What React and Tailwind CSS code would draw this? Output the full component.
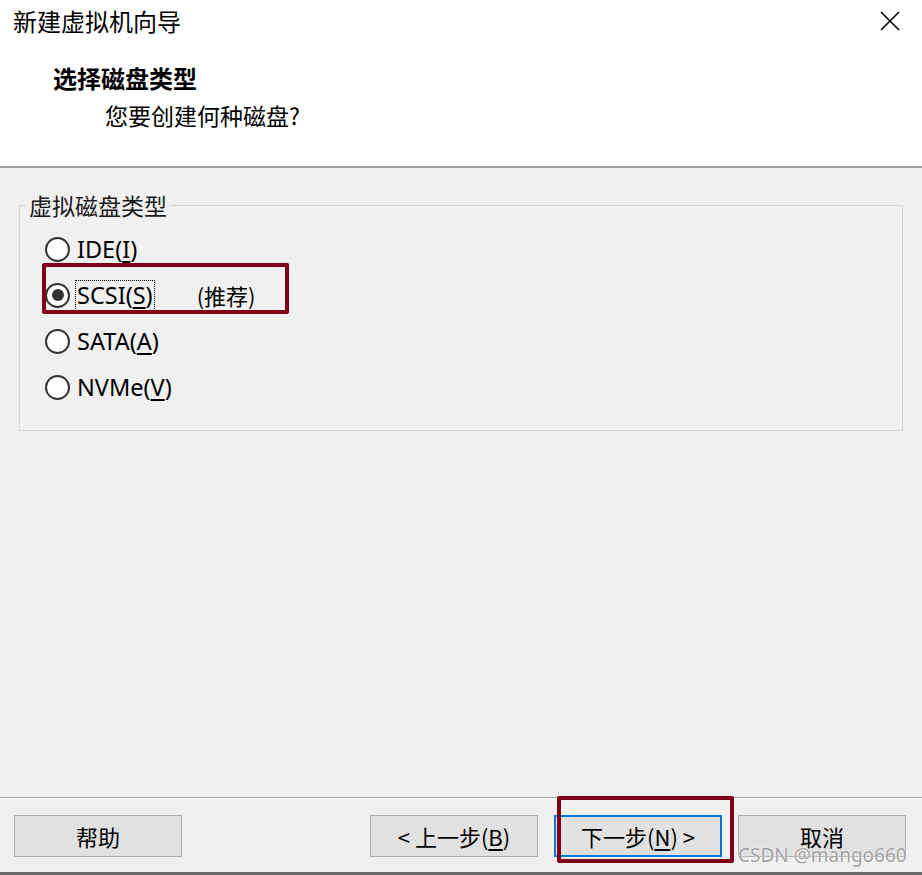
import { useState } from 'react';

const cjk = { fontFamily: '"Noto Sans CJK SC", "Noto Sans", sans-serif' };
const latin = { fontFamily: '"Noto Sans", "Noto Sans CJK SC", sans-serif' };

function Radio({ checked, name, hotkey, focused, extra, onClick }) {
  return (
    <div className="flex items-center h-[46px] cursor-default" onClick={onClick}>
      <span className="w-[25px] h-[25px] rounded-full border-2 border-[#333] bg-white flex items-center justify-center shrink-0">
        {checked && <span className="w-[12px] h-[12px] rounded-full bg-[#333]" />}
      </span>
      <span
        className={`ml-[6px] px-[1px] leading-[29px] text-[23.5px] text-black ${focused ? 'outline-1 outline-dotted outline-black' : ''}`}
        style={latin}
      >
        {name}(<span className="underline underline-offset-[3px]">{hotkey}</span>)
      </span>
      {extra && <span className="ml-[43px] text-[22px] text-black" style={cjk}>{extra}</span>}
    </div>
  );
}

function Button({ children, primary }) {
  return (
    <button
      className={`w-[168px] h-[42px] bg-[#e1e1e1] text-[22px] text-black flex items-center justify-center ${primary ? 'border-2 border-[#0078d7]' : 'border border-[#adadad]'}`}
      style={cjk}
    >
      {children}
    </button>
  );
}

export default function App() {
  const [disk, setDisk] = useState('scsi');
  const options = [
    { id: 'ide', name: 'IDE', hotkey: 'I' },
    { id: 'scsi', name: 'SCSI', hotkey: 'S', extra: '(推荐)' },
    { id: 'sata', name: 'SATA', hotkey: 'A' },
    { id: 'nvme', name: 'NVMe', hotkey: 'V' },
  ];

  return (
    <div className="w-[922px] h-[875px] flex flex-col bg-[#f0f0f0] relative overflow-hidden" style={cjk}>
      {/* Header */}
      <header className="h-[166px] bg-white flex flex-col shrink-0">
        <div className="flex items-center justify-between h-[42px] pl-[13px] pr-[22px]">
          <span className="text-[24px] text-black leading-none">新建虚拟机向导</span>
          <svg width="20" height="20" viewBox="0 0 20 20" className="text-black">
            <path d="M1 1 L19 19 M19 1 L1 19" stroke="currentColor" strokeWidth="1.6" />
          </svg>
        </div>
        <div className="pl-[53px] pt-[24px] text-[24px] font-bold leading-none text-black">选择磁盘类型</div>
        <div className="pl-[105px] pt-[14px] text-[23px] leading-none text-black">您要创建何种磁盘?</div>
      </header>
      <div className="h-[2px] bg-[#a0a0a0] shrink-0" />

      {/* Body */}
      <main className="flex-1 px-[19px] pt-[24px]">
        <fieldset className="border border-[#d5d5d5] h-[239px] p-0 m-0 min-w-0">
          <legend className="ml-[6px] px-[3px] text-[23px] leading-[26px] text-[#1a1a1a]">虚拟磁盘类型</legend>
          <div className="flex flex-col pt-[8px] pl-[25px]">
            {options.map((o) => (
              <Radio
                key={o.id}
                checked={disk === o.id}
                focused={o.id === 'scsi'}
                name={o.name}
                hotkey={o.hotkey}
                extra={o.extra}
                onClick={() => setDisk(o.id)}
              />
            ))}
          </div>
        </fieldset>
      </main>

      {/* Footer */}
      <div className="h-[1px] bg-[#a0a0a0] shrink-0" />
      <div className="h-[1px] bg-white shrink-0" />
      <footer className="h-[73px] flex items-start pt-[16px] pl-[14px] pr-[16px] gap-[16px] shrink-0">
        <Button>帮助</Button>
        <div className="flex-1" />
        <Button>&lt; 上一步(<span className="underline underline-offset-[3px]">B</span>)</Button>
        <Button primary>下一步(<span className="underline underline-offset-[3px]">N</span>) &gt;</Button>
        <Button>取消</Button>
      </footer>
      <div className="h-[3px] bg-[#696969] shrink-0" />

      {/* Annotations */}
      <div className="absolute left-[42px] top-[263px] w-[247px] h-[51px] border-4 border-[#7f0019] rounded-[2px] pointer-events-none" />
      <div className="absolute left-[557px] top-[796px] w-[177px] h-[67px] border-4 border-[#7f0019] rounded-[2px] pointer-events-none" />
      <div
        className="absolute left-[738px] top-[841px] text-[19px] text-[#a0a0a0] pointer-events-none"
        style={{ ...latin, textShadow: '0 0 2px #fff, 0 0 1px #fff' }}
      >
        CSDN @mango660
      </div>
    </div>
  );
}
